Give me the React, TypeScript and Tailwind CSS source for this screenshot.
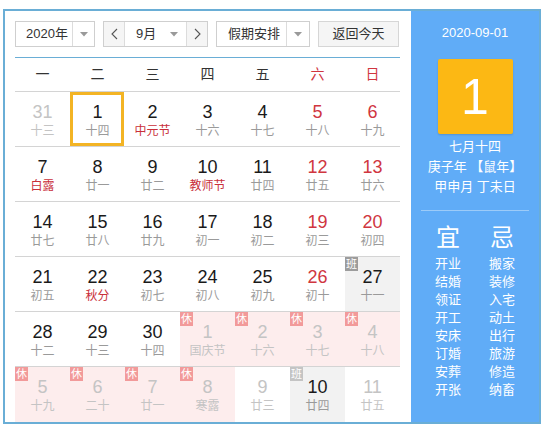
import React from "react";

type Cell = {
  d: string;
  l: string;
  kind?: "faded" | "normal";
  red?: boolean;
  fest?: boolean;
  badge?: "休" | "班" | "班2";
  sel?: boolean;
};

const rows: Cell[][] = [
  [
    { d: "31", l: "十三", kind: "faded" },
    { d: "1", l: "十四", sel: true },
    { d: "2", l: "中元节", fest: true },
    { d: "3", l: "十六" },
    { d: "4", l: "十七" },
    { d: "5", l: "十八", red: true },
    { d: "6", l: "十九", red: true },
  ],
  [
    { d: "7", l: "白露", fest: true },
    { d: "8", l: "廿一" },
    { d: "9", l: "廿二" },
    { d: "10", l: "教师节", fest: true },
    { d: "11", l: "廿四" },
    { d: "12", l: "廿五", red: true },
    { d: "13", l: "廿六", red: true },
  ],
  [
    { d: "14", l: "廿七" },
    { d: "15", l: "廿八" },
    { d: "16", l: "廿九" },
    { d: "17", l: "初一" },
    { d: "18", l: "初二" },
    { d: "19", l: "初三", red: true },
    { d: "20", l: "初四", red: true },
  ],
  [
    { d: "21", l: "初五" },
    { d: "22", l: "秋分", fest: true },
    { d: "23", l: "初七" },
    { d: "24", l: "初八" },
    { d: "25", l: "初九" },
    { d: "26", l: "初十", red: true },
    { d: "27", l: "十一", badge: "班" },
  ],
  [
    { d: "28", l: "十二" },
    { d: "29", l: "十三" },
    { d: "30", l: "十四" },
    { d: "1", l: "国庆节", kind: "faded", badge: "休" },
    { d: "2", l: "十六", kind: "faded", badge: "休" },
    { d: "3", l: "十七", kind: "faded", badge: "休" },
    { d: "4", l: "十八", kind: "faded", badge: "休" },
  ],
  [
    { d: "5", l: "十九", kind: "faded", badge: "休" },
    { d: "6", l: "二十", kind: "faded", badge: "休" },
    { d: "7", l: "廿一", kind: "faded", badge: "休" },
    { d: "8", l: "寒露", kind: "faded", badge: "休" },
    { d: "9", l: "廿三", kind: "faded" },
    { d: "10", l: "廿四", badge: "班2" },
    { d: "11", l: "廿五", kind: "faded" },
  ],
];

const yi = ["开业", "结婚", "领证", "开工", "安床", "订婚", "安葬", "开张"];
const ji = ["搬家", "装修", "入宅", "动土", "出行", "旅游", "修造", "纳畜"];

function Caret() {
  return (
    <svg width="8" height="5" viewBox="0 0 8 5">
      <polygon points="0,0 8,0 4,4.5" fill="#9a9a9a" />
    </svg>
  );
}

function Chevron({ dir }: { dir: "l" | "r" }) {
  return (
    <svg width="7" height="12" viewBox="0 0 7 12">
      <polyline
        points={dir === "l" ? "6,1 1,6 6,11" : "1,1 6,6 1,11"}
        fill="none"
        stroke="#555"
        strokeWidth="1.1"
      />
    </svg>
  );
}

function DayCell({ c, last }: { c: Cell; last: boolean }) {
  const bg =
    c.badge === "休"
      ? "bg-[#fdeded]"
      : c.badge === "班" || c.badge === "班2"
      ? "bg-[#f2f2f2]"
      : "bg-white";
  const numColor =
    c.kind === "faded"
      ? "text-[#c4c4c4]"
      : c.red
      ? "text-[#d0363f]"
      : "text-[#1a1a1a]";
  const lunarColor =
    c.kind === "faded"
      ? "text-[#c4c4c4]"
      : c.fest
      ? "text-[#c9303a]"
      : "text-[#9a9a9a]";
  return (
    <div className={`relative flex flex-col items-center pt-[10px] ${bg}`}>
      {c.badge && (
        <div
          className={`absolute left-0 top-0 w-[13px] h-[14px] text-[11px] leading-[14px] text-white text-center ${
            c.badge === "休"
              ? "bg-[#f29a9a]"
              : c.badge === "班"
              ? "bg-[#9c9c9c]"
              : "bg-[#c4c4c4]"
          }`}
        >
          {c.badge === "休" ? "休" : "班"}
        </div>
      )}
      <div className={`text-[18px] leading-[20px] ${numColor}`}>{c.d}</div>
      <div className={`text-[12px] leading-[16px] mt-[1px] ${lunarColor}`}>{c.l}</div>
      {c.sel && (
        <div className="absolute left-0 top-0 w-[54px] h-[54px] border-[3px] border-[#f3b424]" />
      )}
      {last ? null : null}
    </div>
  );
}

export default function App() {
  return (
    <div
      className="pl-[3px] pt-[9px]"
      style={{ fontFamily: '"Liberation Sans", "Noto Sans CJK SC", sans-serif' }}
    >
      <div className="flex w-[538px] h-[415px] border-2 border-[#6aaed6] bg-white">
        {/* Left */}
        <div className="w-[406px] pl-[10px] pr-[11px] pt-[10px]">
          {/* toolbar */}
          <div className="flex gap-[8px] h-[26px] text-[13px] text-[#333]">
            <div className="w-[80px] flex border border-[#cfcfcf] bg-white">
              <div className="w-[56px] flex items-center pl-[10px]">2020年</div>
              <div className="flex-1 border-l border-[#dcdcdc] flex items-center justify-center">
                <Caret />
              </div>
            </div>
            <div className="w-[105px] flex border border-[#cfcfcf] bg-white">
              <div className="w-[21px] flex items-center justify-center bg-[#f5f5f5] border-r border-[#dcdcdc]">
                <Chevron dir="l" />
              </div>
              <div className="flex-1 flex items-center pl-[11px] pr-[8px] justify-between">
                <span>9月</span>
                <Caret />
              </div>
              <div className="w-[21px] flex items-center justify-center bg-[#f5f5f5] border-l border-[#dcdcdc]">
                <Chevron dir="r" />
              </div>
            </div>
            <div className="w-[94px] flex border border-[#cfcfcf] bg-white">
              <div className="w-[69px] flex items-center pl-[11px]">假期安排</div>
              <div className="flex-1 border-l border-[#dcdcdc] flex items-center justify-center">
                <Caret />
              </div>
            </div>
            <div className="w-[81px] flex items-center justify-center border border-[#d6d6d6] bg-[#f5f5f5]">
              返回今天
            </div>
          </div>
          <div className="mt-[10px] h-px bg-[#6aaed6]" />
          {/* week header */}
          <div className="grid grid-cols-7 h-[34px] border-b border-[#d4d4d4] text-[14px]">
            {["一", "二", "三", "四", "五", "六", "日"].map((w, i) => (
              <div
                key={w}
                className={`flex items-center justify-center ${
                  i >= 5 ? "text-[#d0363f]" : "text-[#333]"
                }`}
              >
                {w}
              </div>
            ))}
          </div>
          {rows.map((r, ri) => (
            <div
              key={ri}
              className={`grid grid-cols-7 h-[55px] ${
                ri < 5 ? "border-b border-[#d4d4d4]" : ""
              }`}
            >
              {r.map((c, ci) => (
                <DayCell key={ci} c={c} last={ri === 5} />
              ))}
            </div>
          ))}
        </div>
        {/* Right panel */}
        <div className="flex-1 bg-[#60acf7] text-white flex flex-col items-center pt-[12px]">
          <div className="text-[13px] leading-[20px]">2020-09-01</div>
          <div className="mt-[16px] w-[75px] h-[75px] bg-[#fcb814] rounded-[2px] flex items-center justify-center text-[50px] leading-none shadow-[0_1px_2px_rgba(0,0,0,0.15)]">
            1
          </div>
          <div className="mt-[3px] text-[13px] leading-[20px] text-center">
            <div>七月十四</div>
            <div>庚子年 【鼠年】</div>
            <div>甲申月 丁未日</div>
          </div>
          <div className="mt-[13px] w-[108px] h-px bg-[#9ccbf8]" />
          <div className="mt-[12px] flex gap-[26px] text-[24px] leading-[30px]">
            <div className="w-[28px] text-center">宜</div>
            <div className="w-[28px] text-center">忌</div>
          </div>
          <div className="mt-[2px] flex gap-[26px] text-[13px] leading-[18px]">
            <div className="w-[28px] flex flex-col items-center">
              {yi.map((t) => (
                <div key={t}>{t}</div>
              ))}
            </div>
            <div className="w-[28px] flex flex-col items-center">
              {ji.map((t) => (
                <div key={t}>{t}</div>
              ))}
            </div>
          </div>
        </div>
      </div>
    </div>
  );
}
